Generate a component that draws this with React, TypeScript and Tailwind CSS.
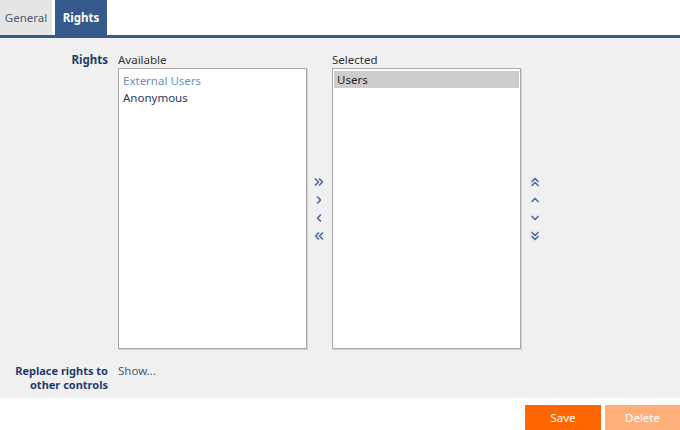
import React from "react";

const ChevR = ({ double = false, dir = "right" }: { double?: boolean; dir?: "right" | "left" | "up" | "down" }) => {
  const rot = dir === "right" ? 0 : dir === "left" ? 180 : dir === "down" ? 90 : -90;
  return (
    <svg width="10" height="10" viewBox="0 0 10 10" style={{ transform: `rotate(${rot}deg)` }}>
      {double ? (
        <g fill="none" stroke="#4a6fa8" strokeWidth="1.7" strokeLinecap="round" strokeLinejoin="round">
          <path d="M1.5 2 L4.5 5 L1.5 8" />
          <path d="M5.5 2 L8.5 5 L5.5 8" />
        </g>
      ) : (
        <path d="M3.5 2 L6.5 5 L3.5 8" fill="none" stroke="#4a6fa8" strokeWidth="1.7" strokeLinecap="round" strokeLinejoin="round" />
      )}
    </svg>
  );
};

export default function App() {
  return (
    <div className="w-[680px] h-[430px] bg-white flex flex-col text-[11.5px]" style={{ fontFamily: '"Noto Sans", "DejaVu Sans", sans-serif' }}>
      <div className="flex h-[35px] gap-[3px]">
        <div className="w-[52px] bg-[#e6e6e6] flex items-center justify-center text-[#4d5b70]">General</div>
        <div className="w-[52px] bg-[#36598b] flex items-center justify-center text-white font-bold">Rights</div>
      </div>
      <div className="h-[3px] bg-[#36598b]" />
      <div className="h-[360px] bg-[#f0f0f0] flex flex-col pt-[14px]">
        <div className="flex">
          <div className="w-[118px] pr-[10px] text-right font-bold text-[#1f3d6b] leading-[16px]">Rights</div>
          <div className="flex flex-col">
            <div className="text-[#333] leading-[16px]">Available</div>
            <div className="flex">
              <div className="w-[189px] h-[281px] bg-white border border-[#a9a9a9] shadow-[1px_1px_0_#d0d0d0] pt-[3px] px-[4px] leading-[17px]">
                <div className="text-[#6d90c8]">External Users</div>
                <div className="text-[#1f3a60]">Anonymous</div>
              </div>
              <div className="w-[25px] flex flex-col items-center justify-center gap-[8px] pr-[1px]">
                <ChevR double dir="right" />
                <ChevR dir="right" />
                <ChevR dir="left" />
                <ChevR double dir="left" />
              </div>
            </div>
          </div>
          <div className="flex flex-col">
            <div className="text-[#333] leading-[16px]">Selected</div>
            <div className="flex">
              <div className="w-[189px] h-[281px] bg-white border border-[#a9a9a9] shadow-[1px_1px_0_#d0d0d0] pt-[2px] px-[1px] leading-[17px]">
                <div className="bg-[#cdcdcd] px-[3px] text-[#222]">Users</div>
              </div>
              <div className="w-[28px] flex flex-col items-center justify-center gap-[8px]">
                <ChevR double dir="up" />
                <ChevR dir="up" />
                <ChevR dir="down" />
                <ChevR double dir="down" />
              </div>
            </div>
          </div>
        </div>
        <div className="flex mt-[15px]">
          <div className="w-[118px] pr-[10px] text-right font-bold text-[#1f3d6b] leading-[14px] text-[11px]">
            <div>Replace rights to</div>
            <div>other controls</div>
          </div>
          <div className="text-[#4d5b70] leading-[14px]">Show...</div>
        </div>
      </div>
      <div className="flex justify-end gap-[4px] pt-[7px]">
        <div className="w-[76px] h-[25px] bg-[#ff6600] text-white flex items-center justify-center">Save</div>
        <div className="w-[75px] h-[25px] bg-[#ffb07a] text-white flex items-center justify-center">Delete</div>
      </div>
    </div>
  );
}
